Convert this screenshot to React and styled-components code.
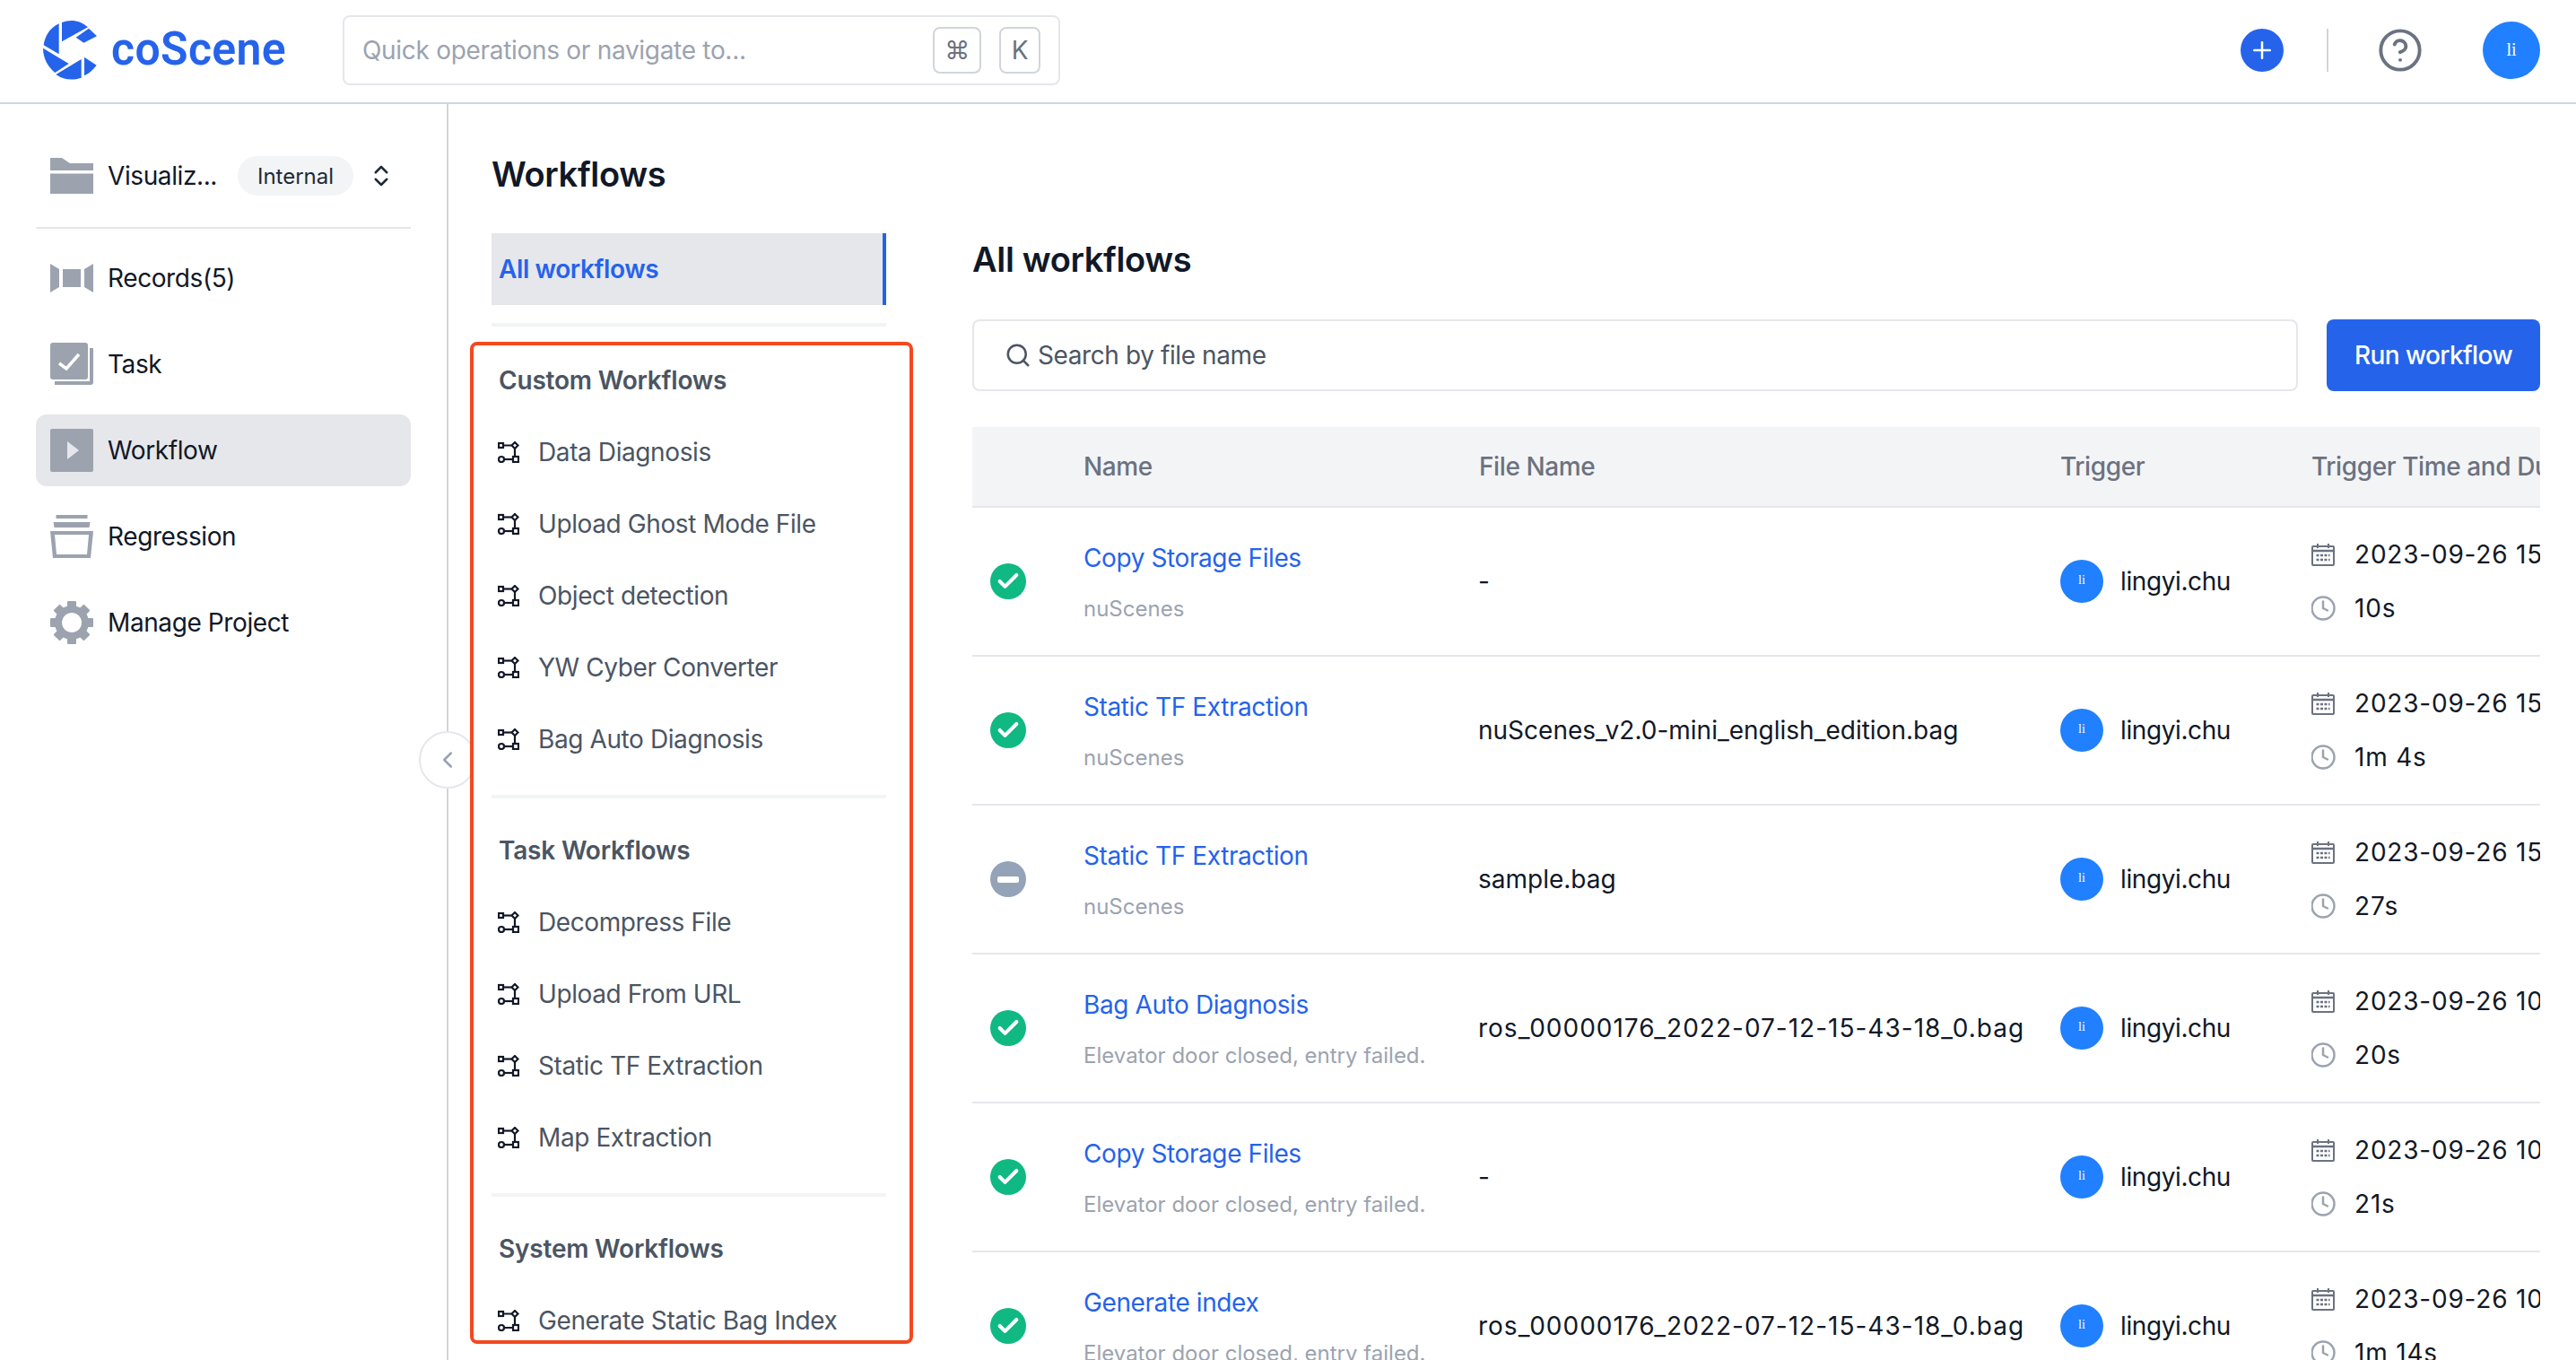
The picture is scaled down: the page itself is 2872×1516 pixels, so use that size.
import React from 'react'
import styled, { createGlobalStyle } from 'styled-components'
import { Search, ChevronLeft, Plus, CircleHelp, ChevronsUpDown, Check, Clock } from 'lucide-react'

const GlobalStyle = createGlobalStyle`
  html, body {
    margin: 0;
    padding: 0;
    background: #fff;
  }
  * {
    box-sizing: border-box;
  }
`

const Page = styled.div`
  width: 2872px;
  height: 1516px;
  overflow: hidden;
  font-family: Inter, 'Liberation Sans', sans-serif;
  font-size: 28px;
  letter-spacing: -0.4px;
  color: #111827;
  display: flex;
  flex-direction: column;
`

const Header = styled.header`
  height: 116px;
  flex: none;
  display: flex;
  align-items: center;
  padding: 0 40px 2px 44px;
  border-bottom: 2px solid #d1d5db;
`

const Logo = styled.div`
  display: flex;
  align-items: center;
  width: 338px;
  flex: none;
`

const LogoText = styled.span`
  font-family: Roboto, sans-serif;
  font-weight: 600;
  font-size: 52px;
  letter-spacing: 0.4px;
  line-height: 1;
  color: #2563eb;
  margin-left: 10px;
  margin-top: -2px;
  transform: scaleX(0.96);
  transform-origin: left center;
`

const QuickSearch = styled.div`
  width: 800px;
  height: 78px;
  border: 2px solid #e5e7eb;
  border-radius: 8px;
  display: flex;
  align-items: center;
  padding: 0 20px;
  color: #9ca3af;
`

const Placeholder = styled.span`
  flex: 1;
  letter-spacing: -0.3px;
`

const Kbd = styled.kbd`
  font-family: Inter, sans-serif;
  font-size: 28px;
  width: ${({ $w }) => $w}px;
  height: 52px;
  margin-left: ${({ $ml }) => $ml || 0}px;
  display: flex;
  align-items: center;
  justify-content: center;
  color: #6b7280;
  border: 2px solid #d1d5db;
  border-radius: 8px;
`

const HeaderRight = styled.div`
  margin-left: auto;
  display: flex;
  align-items: center;
  color: #6b7280;
`

const AddButton = styled.div`
  width: 48px;
  height: 48px;
  border-radius: 50%;
  background: #2563eb;
  color: #fff;
  display: flex;
  align-items: center;
  justify-content: center;
`

const HeaderDivider = styled.div`
  width: 2px;
  height: 48px;
  background: #d1d5db;
  margin: 0 54px 0 48px;
`

const Avatar = styled.div`
  width: ${({ $size }) => $size}px;
  height: ${({ $size }) => $size}px;
  flex: none;
  border-radius: 50%;
  background: #2080ff;
  color: #fff;
  font-family: 'Liberation Serif', serif;
  font-size: ${({ $size }) => ($size > 50 ? 20 : 14)}px;
  letter-spacing: 0;
  display: flex;
  align-items: center;
  justify-content: center;
  padding-bottom: 2px;
`

const HeaderAvatar = styled(Avatar)`
  margin-left: 66px;
`

const Body = styled.div`
  flex: 1;
  min-height: 0;
  display: flex;
`

const Sidebar = styled.aside`
  width: 500px;
  flex: none;
  position: relative;
  padding: 58px 40px 0;
  border-right: 2px solid #d1d5db;
`

const ProjectRow = styled.div`
  display: flex;
  align-items: center;
  height: 44px;
  padding-left: 16px;
`

const ProjectName = styled.span`
  margin-left: 16px;
  width: 145px;
`

const Chip = styled.span`
  width: 129px;
  height: 44px;
  flex: none;
  border-radius: 22px;
  background: #f3f4f6;
  font-size: 24px;
  letter-spacing: 0;
  color: #1f2937;
  display: flex;
  align-items: center;
  justify-content: center;
`

const Switcher = styled.span`
  display: flex;
  margin-left: 16px;
  color: #1f2937;
`

const SideDivider = styled.div`
  height: 2px;
  background: #e5e7eb;
  margin: 35px 0 15px;
`

const Nav = styled.nav`
  display: flex;
  flex-direction: column;
  gap: 16px;
`

const NavItem = styled.div`
  height: 80px;
  border-radius: 12px;
  padding-left: 16px;
  display: flex;
  align-items: center;
  gap: 16px;
  background: ${({ $active }) => ($active ? '#e5e7eb' : 'transparent')};
`

const Collapse = styled.div`
  position: absolute;
  top: 699px;
  right: -33px;
  width: 64px;
  height: 64px;
  border-radius: 50%;
  background: #fff;
  border: 2px solid #e5e7eb;
  color: #9ca3af;
  display: flex;
  align-items: center;
  justify-content: center;
  z-index: 1;
`

const Main = styled.main`
  flex: 1;
  min-width: 0;
  display: flex;
  padding: 0 40px 0 48px;
  gap: 96px;
`

const WorkflowColumn = styled.div`
  width: 440px;
  flex: none;
  padding-top: 56px;
`

const PageTitle = styled.h1`
  font-size: 38px;
  line-height: 44px;
  font-weight: 600;
  letter-spacing: -0.35px;
  margin: 0;
  color: #111827;
`

const ActiveTab = styled.div`
  height: 80px;
  margin-top: 44px;
  background: #e5e7eb;
  border-right: 4px solid #2563eb;
  color: #2563eb;
  font-weight: 600;
  padding-left: 8px;
  display: flex;
  align-items: center;
`

const Rule = styled.div`
  height: 4px;
  background: #f3f4f6;
  margin-top: ${({ $mt }) => $mt}px;
`

const MarkedList = styled.div`
  position: relative;
  z-index: 2;
  height: 1117px;
  margin: 17px -30px 0 -24px;
  padding: 19px 26px 0 20px;
  border: 4px solid #f4491f;
  border-radius: 8px;
  background: #fff;
  overflow: hidden;
`

const GroupTitle = styled.h2`
  font-size: 28px;
  line-height: 40px;
  font-weight: 600;
  letter-spacing: -0.2px;
  color: #4b5563;
  margin: ${({ $mt }) => $mt || 0}px 0 20px;
  padding-left: 8px;
`

const WorkflowItem = styled.div`
  height: 80px;
  display: flex;
  align-items: center;
  gap: 21px;
  padding-left: 7px;
  color: #4b5563;
  white-space: nowrap;
`

const Content = styled.section`
  flex: 1;
  min-width: 0;
  padding-top: 151px;
`

const ToolRow = styled.div`
  display: flex;
  gap: 32px;
  margin-top: 45px;
  margin-bottom: 40px;
`

const SearchBox = styled.div`
  flex: 1;
  height: 80px;
  border: 2px solid #e5e7eb;
  border-radius: 8px;
  color: #4b5563;
  display: flex;
  align-items: center;
  gap: 7px;
  padding-left: 34px;
`

const RunButton = styled.button`
  width: 238px;
  height: 80px;
  border: 0;
  border-radius: 8px;
  background: #2563eb;
  color: #fff;
  font-family: inherit;
  font-size: 28px;
  font-weight: 500;
  letter-spacing: -0.6px;
`

const Table = styled.div`
  width: 1748px;
  overflow: hidden;
`

const gridColumns = `
  display: grid;
  grid-template-columns: 124px 441px 648px 280px 255px;
`

const HeadRow = styled.div`
  ${gridColumns}
  height: 90px;
  align-items: center;
  background: #f3f4f6;
  border-bottom: 2px solid #e5e7eb;
  color: #6b7280;
  font-weight: 500;
  white-space: nowrap;
`

const Row = styled.div`
  ${gridColumns}
  height: 166px;
  align-items: center;
  border-bottom: 2px solid #e5e7eb;
  white-space: nowrap;
`

const StatusCell = styled.div`
  padding-left: 20px;
`

const StatusDot = styled.div`
  width: 40px;
  height: 40px;
  border-radius: 50%;
  background: ${({ $ok }) => ($ok ? '#10b981' : '#94a3b8')};
  color: #fff;
  display: flex;
  align-items: center;
  justify-content: center;
`

const MinusBar = styled.span`
  width: 24px;
  height: 7px;
  border-radius: 2px;
  background: #fff;
`

const NameCell = styled.div`
  padding-top: 5px;
`

const NameLink = styled.div`
  color: #2563eb;
  line-height: 40px;
`

const SubText = styled.div`
  color: #9ca3af;
  font-size: 24px;
  letter-spacing: 0;
  line-height: 40px;
  margin-top: 17px;
`

const FileCell = styled.div`
  letter-spacing: ${({ $numeric }) => ($numeric ? '1px' : '0')};
  margin-left: -1px;
`

const TriggerCell = styled.div`
  display: flex;
  align-items: center;
  gap: 19px;
`

const TimeCell = styled.div`
  display: flex;
  flex-direction: column;
  gap: 20px;
  overflow: hidden;
`

const TimeLine = styled.div`
  display: flex;
  align-items: center;
  gap: 22px;
  height: 40px;
  letter-spacing: 0.8px;
`

const NavIcon = ({ children }) => (
  <svg width='48' height='48' viewBox='0 0 48 48' fill='#9ca3af' style={{ flex: 'none' }}>
    {children}
  </svg>
)

const LogoMark = () => (
  <svg width='70' height='70' viewBox='0 0 210 210' fill='#2563eb'>
    <path d='M14 88 C18 56 36 30 65 16 L65 118 Z' />
    <path d='M75 12 C106 0 138 6 162 28 L75 76 Z' />
    <path d='M122 62 L165 32 L192 58 L148 80 Z' />
    <path d='M12 98 L98 150 L52 180 C28 160 12 132 12 98 Z' />
    <path d='M55 186 L140 135 L140 197 C110 207 80 204 55 186 Z' />
    <path d='M150 128 L191 155 C180 170 166 183 150 190 Z' />
  </svg>
)

const FlowIcon = () => (
  <svg width='24' height='24' viewBox='0 0 24 24' fill='none' stroke='#111827' strokeWidth='2.2' style={{ flex: 'none' }}>
    <rect x='1' y='2' width='5' height='5' />
    <path d='M6 4.5H15' />
    <path d='M19 1L22.5 4.5L19 8L15.5 4.5Z' />
    <path d='M19 8V17' />
    <rect x='17' y='17' width='6' height='6' />
    <path d='M7 20H17' />
    <circle cx='4' cy='20' r='3' />
  </svg>
)

const CalendarIcon = () => (
  <svg width='26' height='26' viewBox='0 0 26 26' fill='none' stroke='#6b7280' strokeWidth='2' style={{ flex: 'none' }}>
    <rect x='1' y='4' width='24' height='21' rx='1' />
    <path d='M1 9H25' strokeWidth='2.5' />
    <path d='M7 1V6M19 1V6' />
    <path d='M5.5 14H20.5M5.5 19H20.5' strokeWidth='2.5' strokeDasharray='3 1.5' />
  </svg>
)

const gearTeeth = [0, 45, 90, 135, 180, 225, 270, 315]

const navItems = [
  {
    label: 'Records(5)',
    icon: (
      <>
        <path d='M0 8L10 14V34L0 40Z' />
        <rect x='14' y='14' width='20' height='20' />
        <path d='M48 8L38 14V34L48 40Z' />
      </>
    ),
  },
  {
    label: 'Task',
    icon: (
      <>
        <rect x='0' y='0' width='42' height='41' rx='3' />
        <path d='M44 6H48V44A3 3 0 0 1 45 47H5V43H44Z' />
        <path d='M10 23L18 29L32 13' fill='none' stroke='#fff' strokeWidth='3.5' />
      </>
    ),
  },
  {
    label: 'Workflow',
    active: true,
    icon: (
      <>
        <rect x='0' y='0' width='48' height='48' rx='2' />
        <path d='M19 14L32 24L19 34Z' fill='#e5e7eb' />
      </>
    ),
  },
  {
    label: 'Regression',
    icon: (
      <>
        <rect x='6.5' y='0' width='35' height='4' />
        <path d='M3.5 8H44.5L43.5 14H4.5Z' />
        <path fillRule='evenodd' d='M0 18H48L45 48H3ZM5 22L7 44H41L43 22Z' />
      </>
    ),
  },
  {
    label: 'Manage Project',
    icon: (
      <>
        {gearTeeth.map(deg => (
          <rect key={deg} x='19' y='0' width='10' height='10' rx='1' transform={`rotate(${deg} 24 24)`} />
        ))}
        <path fillRule='evenodd' d='M24 5A19 19 0 1 1 23.9 5ZM24 13A11 11 0 1 0 24.1 13Z' />
      </>
    ),
  },
]

const workflowGroups = [
  { title: 'Custom Workflows', items: ['Data Diagnosis', 'Upload Ghost Mode File', 'Object detection', 'YW Cyber Converter', 'Bag Auto Diagnosis'] },
  { title: 'Task Workflows', items: ['Decompress File', 'Upload From URL', 'Static TF Extraction', 'Map Extraction'] },
  { title: 'System Workflows', items: ['Generate Static Bag Index'] },
]

const elevator = 'Elevator door closed, entry failed.'
const bagFile = 'ros_00000176_2022-07-12-15-43-18_0.bag'

const runs = [
  { name: 'Copy Storage Files', sub: 'nuScenes', file: '-', time: '2023-09-26 15:32:10', took: '10s', ok: true },
  { name: 'Static TF Extraction', sub: 'nuScenes', file: 'nuScenes_v2.0-mini_english_edition.bag', time: '2023-09-26 15:30:41', took: '1m 4s', ok: true },
  { name: 'Static TF Extraction', sub: 'nuScenes', file: 'sample.bag', time: '2023-09-26 15:28:02', took: '27s', ok: false },
  { name: 'Bag Auto Diagnosis', sub: elevator, file: bagFile, time: '2023-09-26 10:45:19', took: '20s', ok: true },
  { name: 'Copy Storage Files', sub: elevator, file: '-', time: '2023-09-26 10:44:37', took: '21s', ok: true },
  { name: 'Generate index', sub: elevator, file: bagFile, time: '2023-09-26 10:42:55', took: '1m 14s', ok: true },
]

const App = () => {
  return (
    <Page>
      <GlobalStyle />
      <Header>
        <Logo>
          <LogoMark />
          <LogoText>coScene</LogoText>
        </Logo>
        <QuickSearch>
          <Placeholder>Quick operations or navigate to...</Placeholder>
          <Kbd $w={54}>⌘</Kbd>
          <Kbd $w={46} $ml={20}>K</Kbd>
        </QuickSearch>
        <HeaderRight>
          <AddButton>
            <Plus size={30} strokeWidth={2} />
          </AddButton>
          <HeaderDivider />
          <CircleHelp size={52} strokeWidth={1.8} />
          <HeaderAvatar $size={64}>li</HeaderAvatar>
        </HeaderRight>
      </Header>
      <Body>
        <Sidebar>
          <ProjectRow>
            <NavIcon>
              <path d='M0 4H13L22 10H48V18H0Z' />
              <rect x='0' y='21.5' width='48' height='22.5' />
            </NavIcon>
            <ProjectName>Visualiz...</ProjectName>
            <Chip>Internal</Chip>
            <Switcher>
              <ChevronsUpDown size={30} strokeWidth={2} />
            </Switcher>
          </ProjectRow>
          <SideDivider />
          <Nav>
            {navItems.map(item => (
              <NavItem key={item.label} $active={item.active}>
                <NavIcon>{item.icon}</NavIcon>
                {item.label}
              </NavItem>
            ))}
          </Nav>
          <Collapse>
            <ChevronLeft size={30} strokeWidth={2} />
          </Collapse>
        </Sidebar>
        <Main>
          <WorkflowColumn>
            <PageTitle>Workflows</PageTitle>
            <ActiveTab>All workflows</ActiveTab>
            <Rule $mt={20} />
            <MarkedList>
              {workflowGroups.map((group, i) => (
                <React.Fragment key={group.title}>
                  {i > 0 && <Rule $mt={22} />}
                  <GroupTitle $mt={i > 0 ? 38 : 0}>{group.title}</GroupTitle>
                  {group.items.map(item => (
                    <WorkflowItem key={item}>
                      <FlowIcon />
                      {item}
                    </WorkflowItem>
                  ))}
                </React.Fragment>
              ))}
            </MarkedList>
          </WorkflowColumn>
          <Content>
            <PageTitle>All workflows</PageTitle>
            <ToolRow>
              <SearchBox>
                <Search size={30} strokeWidth={2} />
                Search by file name
              </SearchBox>
              <RunButton>Run workflow</RunButton>
            </ToolRow>
            <Table>
              <HeadRow>
                <span />
                <span>Name</span>
                <span>File Name</span>
                <span>Trigger</span>
                <span>Trigger Time and Duration</span>
              </HeadRow>
              {runs.map((run, i) => (
                <Row key={i}>
                  <StatusCell>
                    <StatusDot $ok={run.ok}>
                      {run.ok ? <Check size={28} strokeWidth={3.5} /> : <MinusBar />}
                    </StatusDot>
                  </StatusCell>
                  <NameCell>
                    <NameLink>{run.name}</NameLink>
                    <SubText>{run.sub}</SubText>
                  </NameCell>
                  <FileCell $numeric={run.file === bagFile}>{run.file}</FileCell>
                  <TriggerCell>
                    <Avatar $size={48}>li</Avatar>
                    lingyi.chu
                  </TriggerCell>
                  <TimeCell>
                    <TimeLine>
                      <CalendarIcon />
                      {run.time}
                    </TimeLine>
                    <TimeLine>
                      <Clock size={30} color='#9ca3af' strokeWidth={2} style={{ margin: '0 -2px' }} />
                      {run.took}
                    </TimeLine>
                  </TimeCell>
                </Row>
              ))}
            </Table>
          </Content>
        </Main>
      </Body>
    </Page>
  )
}

export default App
